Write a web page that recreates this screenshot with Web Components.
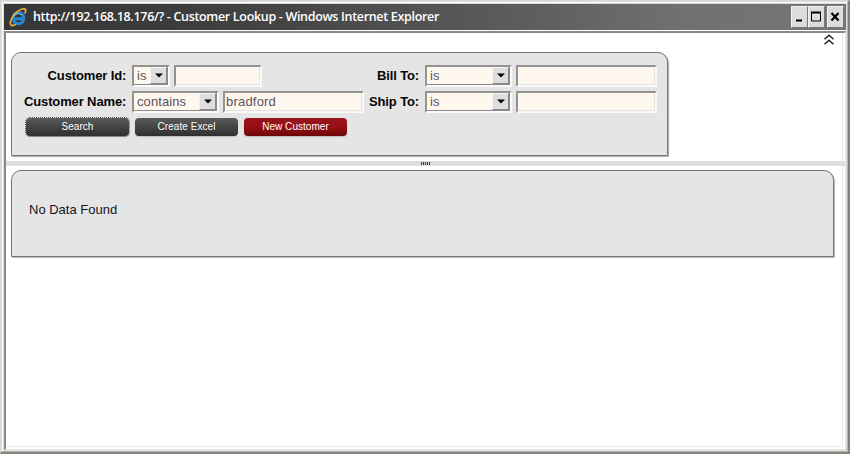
<!DOCTYPE html>
<html lang="en"><head><meta charset="utf-8"><title>Customer Lookup</title>
<style>html,body{margin:0;width:850px;height:454px;overflow:hidden}body{font:13px "Liberation Sans",Arial,sans-serif;color:#15131d}</style>
</head><body>
<lookup-window>
<title-bar slot="title">http://192.168.18.176/? - Customer Lookup - Windows Internet Explorer</title-bar>
<search-panel></search-panel>
<split-bar></split-bar>
<result-panel>No Data Found</result-panel>
</lookup-window>
<script>
const define=(name,html)=>customElements.define(name,class extends HTMLElement{
 connectedCallback(){if(this.shadowRoot)return;const t=document.createElement('template');t.innerHTML=html;
 this.attachShadow({mode:'open'}).append(t.content.cloneNode(true));}
});
define('lookup-window',`<style>
:host{display:block;box-sizing:border-box;width:850px;height:454px;background:#dddbd7;border:1px solid #d8d6d1;border-right:2px solid #858380;border-bottom:2px solid #858380}
.frame{box-sizing:border-box;height:451px;border:1px solid #dedcd8;border-right-color:#b9b7b0;border-bottom-color:#b9b7b0;box-shadow:inset 1px 1px #fff;padding:2px 1px 1px 2px}
.body{position:relative;box-sizing:border-box;height:419px;margin-top:1px;background:#fff;border:solid;border-width:2px 1px 1px 2px;border-color:#8c8a88 #e9e9e9 #e9e9e9 #8c8a88;box-shadow:0 -1px #fff,inset -2px -2px #fff,inset -3px -3px #e9e9e9;padding:19px 3px 0 0}
svg{position:absolute;left:817px;top:1px}
</style><div class="frame"><slot name="title"></slot><div class="body"><svg width="12" height="12" fill="none" stroke="#222" stroke-width="1.5"><path d="M1.5 5.200 6 1.300l4.500 3.900M1.500 10.200 6 6.300l4.500 3.900"/></svg><slot></slot></div></div>`);
define('title-bar',`<style>
:host{display:flex;box-sizing:border-box;height:26px;align-items:center;background:linear-gradient(90deg,#363636 0,#3c3c3c 20%,#474747 36%,#535353 50%,#606060 65%,#707070 80%,#767676);padding:0 2px 0 5px;color:#fff;font:600 12.5px "Open Sans",sans-serif;white-space:nowrap}
.ie{flex:none;margin-right:6px}.text{flex:1;letter-spacing:-.32px;padding-bottom:1px}
</style><svg class="ie" width="18" height="19" viewBox="0 0 18 19" fill="none"><path d="M14.500 12.200c-1.500 5.300-10.300 4.700-10.300-2.300 0-7.500 11-7.300 10.400.8H5" stroke="#2486d4" stroke-width="3"/><path d="M6 7.600c1.500-2.600 5.200-2.500 6.600-.2" stroke="#7bc8f4"/><path d="M2.500 17.400C-1.500 15 5.500 3.100 13.200 1c4.200-1 4 1.700 2.600 4.600M2.500 17.400c1.200.6 3-.1 4.400-1" stroke="#edae37" stroke-width="1.700"/></svg><div class="text"><slot></slot></div><window-button kind="min"></window-button><window-button kind="max"></window-button><window-button kind="close" style="margin-left:2px"></window-button>`);
customElements.define('window-button',class extends HTMLElement{connectedCallback(){
 const paths={min:'<path d="M5 14.500h6" stroke-width="2"/>',max:'<path d="M3 6.500h10" stroke-width="2"/><path d="M3.500 6v9h9V6" stroke-width="1"/>',close:'<path d="m4.500 7 7 7.500M11.500 7l-7 7.500" stroke-width="2.200"/>'};
 this.attachShadow({mode:'open'}).innerHTML=`<style>:host{display:block;box-sizing:border-box;width:17px;height:22px;background:#dcdcdc;border:1px solid #f4f4f4;border-right-color:#777;border-bottom-color:#777}svg{display:block;margin:-1px 0 0 -1px}</style><svg width="17" height="21" fill="none" stroke="#000">${paths[this.getAttribute('kind')]}</svg>`;
}});
define('text-field',`<style>:host{display:block;box-sizing:border-box;height:22px;background:#fff8ef;border:2px solid;border-color:#939393 #fafafa #fafafa #939393;box-shadow:inset -1px -1px #e3e3e3;padding:0 0 0 1px;line-height:18px;color:#5b5261;white-space:nowrap;letter-spacing:.2px}</style><slot></slot>`);
define('select-field',`<style>:host{display:flex;box-sizing:border-box;height:22px;background:#fff8ef;border:solid;border-width:2px;border-color:#939393 #fafafa #fafafa #939393;box-shadow:inset -1px -1px #8b8b8b;padding:0 1px 1px 3px;line-height:18px;color:#5b5261;white-space:nowrap;letter-spacing:.1px}.t{flex:1}.b{box-sizing:border-box;width:17px;height:17px;background:#dedede;border:1px solid #f4f4f4;border-right-color:#888;border-bottom-color:#888;display:flex;align-items:center;justify-content:center}</style><div class="t"><slot></slot></div><div class="b"><svg width="8" height="5"><path d="M0 .5h8L4 4.500z"/></svg></div>`);
define('action-button',`<style>:host{display:flex;box-sizing:border-box;width:103px;height:18px;align-items:center;justify-content:center;border-radius:4px;background:var(--button-bg,linear-gradient(#5b5b5b,#464646 45%,#303030));box-shadow:0 1px 1px #8886;color:#fff;font-size:10px;letter-spacing:.05px;line-height:16px;padding-bottom:1px}:host([focused]){outline:1px dotted #555}:host([primary]){--button-bg:linear-gradient(#961620,#990e12 50%,#6b0808);}</style><slot></slot>`);
define('search-panel',`<style>
:host{display:block;box-sizing:border-box;width:657px;height:104px;margin-left:5px;border:1px solid #777680;border-radius:10px 10px 0 0;background:#e5e5e5;box-shadow:1px 1px 1px #aaa;padding:12px 0 0 12px}
.cols{display:flex;height:48px}.label{font-weight:bold;text-align:right;line-height:22px;letter-spacing:-.13px;white-space:nowrap;color:#050505}
.col{display:grid;grid-template-rows:22px 22px;row-gap:4px}.row{display:flex;gap:4px}.actions{display:flex;gap:6px;margin:5px 0 0 2px}
</style><div class="cols"><div class="col" style="width:101px"><div class="label">Customer Id:</div><div class="label">Customer Name:</div></div>
<div class="col" style="margin-left:7px;width:232px"><div class="row"><select-field style="width:38px">is</select-field><text-field style="width:88px"></text-field></div><div class="row"><select-field style="width:87px">contains</select-field><text-field style="width:141px">bradford</text-field></div></div>
<div class="col" style="width:55px"><div class="label">Bill To:</div><div class="label">Ship To:</div></div>
<div class="col" style="margin-left:6px;width:233px"><div class="row"><select-field style="width:87px">is</select-field><text-field style="width:141px"></text-field></div><div class="row"><select-field style="width:87px">is</select-field><text-field style="width:141px"></text-field></div></div></div>
<div class="actions"><action-button focused>Search</action-button><action-button>Create Excel</action-button><action-button primary>New Customer</action-button></div>`);
define('split-bar',`<style>:host{display:flex;height:5px;margin:5px -3px 4px 0;background:#dedede;justify-content:center;align-items:center}i{width:10px;height:3px;background:repeating-linear-gradient(90deg,#444 0 1px,#ccc 1px 2px)}</style><i></i>`);
define('result-panel',`<style>:host{display:block;box-sizing:border-box;width:823px;height:87px;margin-left:5px;border:1px solid #777680;border-radius:10px 10px 0 0;background:#e5e5e5;box-shadow:1px 1px 1px #bbb;padding:31px 17px;line-height:16px}</style><slot></slot>`);
</script></body></html>
